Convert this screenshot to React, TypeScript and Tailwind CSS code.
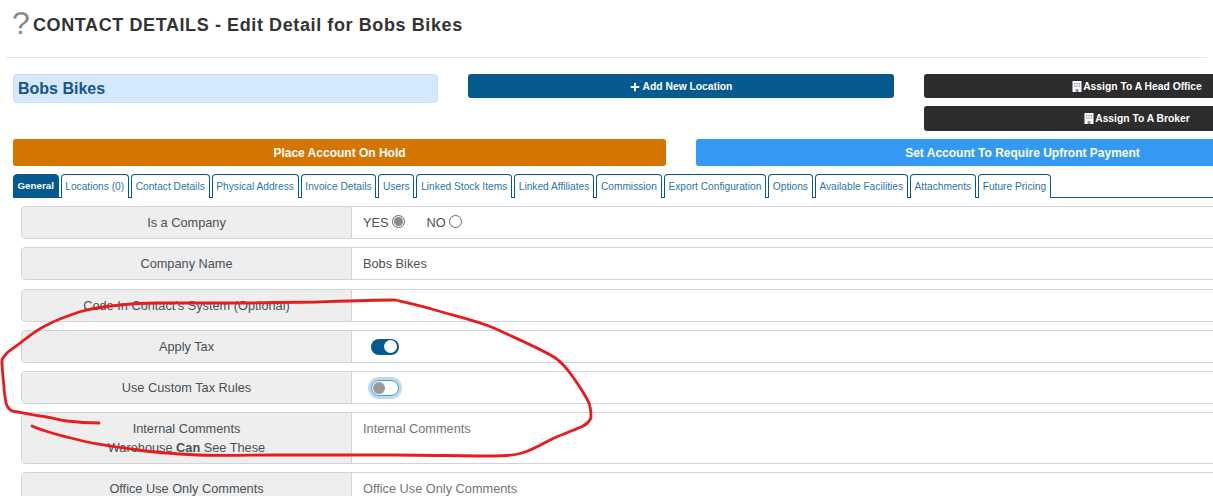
import React from 'react';
import { FaPlus } from 'react-icons/fa';

const tabs = [
    'General', 'Locations (0)', 'Contact Details', 'Physical Address', 'Invoice Details', 'Users', 'Linked Stock Items',
    'Linked Affiliates', 'Commission', 'Export Configuration', 'Options', 'Available Facilities', 'Attachments', 'Future Pricing',
];

const Row: React.FC<{ label: React.ReactNode; className?: string; children?: React.ReactNode }> = ({ label, className, children }) => (
    <div className={`flex w-[1300px] rounded border border-[#ced4da] ${className ?? 'h-[33px]'}`}>
        <div className="flex w-[330px] shrink-0 items-center justify-center rounded-l border-r border-[#ced4da] bg-[#eeeeee] text-center text-[12.75px] leading-[19px] text-[#495057]">
            {label}
        </div>
        <div className="flex flex-1 items-center pl-[11px] text-[12.75px] text-[#495057]">{children}</div>
    </div>
);

const Radio: React.FC<{ checked?: boolean }> = ({ checked }) => (
    <span className="-mt-[3px] ml-[3px] flex h-[13px] w-[13px] items-center justify-center rounded-full border border-[#666666] bg-white">
        {checked && <span className="h-[9px] w-[9px] rounded-full bg-[#8a8a8a]"></span>}
    </span>
);

const BuildingIcon = () => (
    <svg width="10" height="11" viewBox="0 0 10 11">
        <rect x="0.5" y="0" width="9" height="11" rx="0.5" fill="#ffffff" />
        <path d="M2 2h1.4v1.2H2zM4.3 2h1.4v1.2H4.3zM6.6 2H8v1.2H6.6zM2 4.6h1.4v1.2H2zM4.3 4.6h1.4v1.2H4.3zM6.6 4.6H8v1.2H6.6z" fill="#8f8f8f" />
        <rect x="3.6" y="8" width="2.8" height="3" fill="#8f8f8f" />
    </svg>
);

export default function App() {
    return (
        <div className="relative h-[496px] w-[1213px] overflow-hidden bg-white font-['Liberation_Sans',sans-serif]">
            <header className="mx-[6px] flex h-[58px] items-center border-b border-[#e3e3e3] pb-[6px] pl-[6px]">
                <span className="-mt-[6px] w-[21px] text-[32px] leading-none text-[#888888]">?</span>
                <h1 className="text-[18px] font-bold tracking-[0.6px] text-[#333333]">CONTACT DETAILS - Edit Detail for Bobs Bikes</h1>
            </header>

            <div className="mt-4 w-[1350px] pl-[13px]">
                <div className="flex gap-[30px]">
                    <div className="flex h-[29px] w-[425px] items-center rounded border border-[#c5e0fb] bg-[#d4e9fd] pl-[4px] text-[16px] font-bold text-[#17548a]">Bobs Bikes</div>
                    <button className="flex h-[24px] w-[426px] items-center justify-center gap-[3px] rounded-[3px] bg-[#045a8e] pt-[1px] text-[10.3px] font-bold text-white">
                        <FaPlus className="h-[10px] w-[10px]" /> Add New Location
                    </button>
                    <div className="flex w-[426px] flex-col gap-2">
                        <button className="flex h-[24px] items-center justify-center gap-[1px] rounded-[3px] bg-[#2d2d2d] pt-[1px] text-[10.3px] font-bold text-white">
                            <BuildingIcon /> Assign To A Head Office
                        </button>
                        <button className="flex h-[25px] items-center justify-center gap-[1px] rounded-[3px] bg-[#2d2d2d] text-[10.3px] font-bold text-white">
                            <BuildingIcon /> Assign To A Broker
                        </button>
                    </div>
                </div>

                <div className="mt-2 flex gap-[30px]">
                    <button className="h-[27px] w-[653px] rounded-[3px] bg-[#d47500] text-[12px] font-bold text-white">Place Account On Hold</button>
                    <button className="h-[27px] w-[653px] rounded-[3px] bg-[#3399f3] text-[12px] font-bold text-white">Set Account To Require Upfront Payment</button>
                </div>

                <nav className="mt-2 flex h-[24px] w-[1323px] gap-[2px] border-b border-[#045a8e]">
                    {tabs.map((tab, i) => (
                        <div
                            key={tab}
                            className={`flex h-[24px] items-center whitespace-nowrap rounded-t border border-[#045a8e] pt-[1px] ${i === 0 ? 'bg-[#045a8e] px-[3.5px] text-[9.8px] font-bold text-white' : 'border-b-0 bg-white px-[3.75px] text-[10.2px] text-[#2f74a3]'}`}
                        >
                            {tab}
                        </div>
                    ))}
                </nav>

                <div className="ml-2 mt-2 flex flex-col gap-2">
                    <Row label="Is a Company">
                        <span>YES</span>
                        <Radio checked />
                        <span className="ml-[22px]">NO</span>
                        <Radio />
                    </Row>
                    <Row label="Company Name">Bobs Bikes</Row>
                    <Row label="Code In Contact's System (Optional)" className="mt-[1px] h-[33px]" />
                    <Row label="Apply Tax">
                        <span className="ml-2 flex h-4 w-7 items-center justify-end rounded-full bg-[#045a8e] pr-[2px]">
                            <span className="h-[13px] w-[13px] rounded-full bg-white"></span>
                        </span>
                    </Row>
                    <Row label="Use Custom Tax Rules">
                        <span className="ml-2 flex h-4 w-7 items-center rounded-full border border-[#3ba0f0] bg-white pl-[1px] shadow-[0_0_0_3px_#c2d9ea]">
                            <span className="h-[12px] w-[12px] rounded-full bg-[#999999]"></span>
                        </span>
                    </Row>
                    <Row
                        className="h-[52px]"
                        label={
                            <span>
                                Internal Comments
                                <br />
                                Warehouse <b>Can</b> See These
                            </span>
                        }
                    >
                        <span className="-mt-[18px] text-[#757575]">Internal Comments</span>
                    </Row>
                    <Row label="Office Use Only Comments">
                        <span className="text-[#757575]">Office Use Only Comments</span>
                    </Row>
                </div>
            </div>

            {/* red marker scribble drawn over the form */}
            <svg className="pointer-events-none absolute left-0 top-0" width="1213" height="496" fill="none">
                <path
                    d="M99 423 C85 423 75 422 67 421 C55 419 50 417 40 416 C28 414 18 412 12 411 C8 409 7 406 6 403 C5 396 4 392 4 387 C3 378 2 368 2 360 C3 357 5 355 8 352 C13 348 18 345 24 340 C32 334 38 329 47 325 C58 319 68 316 79 312 C90 309 100 307 111 306 C126 304 142 303 158 303 C185 303 210 303 237 303 C263 303 290 302 316 302 C345 301 370 300 395 300 C408 303 422 306 435 310 C455 316 475 320 494 328 C515 338 535 346 554 357 C562 362 568 370 573 377 C579 386 585 394 589 403 C591 408 591 413 591 418 C589 422 586 425 581 427 C572 431 563 434 554 438 C542 444 533 450 522 453 C512 456 503 456 494 456 C462 456 428 455 395 455 C355 455 316 455 277 455 C250 455 225 456 198 455 C178 454 158 453 138 450 C118 447 98 445 79 440 C62 436 45 432 32 426"
                    stroke="#e81c1c"
                    strokeWidth="2.8"
                    strokeLinecap="round"
                    strokeLinejoin="round"
                />
            </svg>
        </div>
    );
}
